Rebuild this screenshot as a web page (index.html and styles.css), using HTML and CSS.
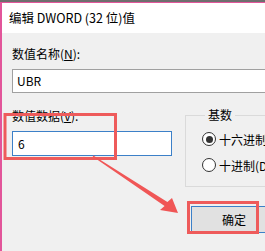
FILE: index.html
```html
<!DOCTYPE html>
<html lang="zh-CN">
<head>
<meta charset="UTF-8">
<title>编辑 DWORD (32 位)值</title>
<link rel="stylesheet" href="styles.css">
</head>
<body>

<div class="topstrip"></div>
<div class="window">
    <div class="titlebar">编辑 DWORD (32 位)值</div>
    <div class="content">
        <div class="label">数值名称(<u>N</u>):</div>
        <div class="textbox name-box">UBR</div>

        <div class="row">
            <div class="left-col">
                <div class="label">数值数据(<u>V</u>):</div>
                <div class="textbox data-box">6</div>
            </div>
            <div class="right-col">
                <fieldset class="group">
                    <legend>基数</legend>
                    <div class="radio-row">
                        <span class="radio checked"></span>
                        <span>十六进制(H)</span>
                    </div>
                    <div class="radio-row">
                        <span class="radio"></span>
                        <span>十进制(D)</span>
                    </div>
                </fieldset>
                <button class="ok-button">确定</button>
            </div>
        </div>
    </div>
</div>

<!-- red annotation marks drawn over the dialog -->
<svg class="marks" width="265" height="251" viewBox="0 0 265 251">
    <rect x="5" y="114.5" width="110.5" height="44" fill="none" stroke="#ee5b5b" stroke-width="3"/>
    <rect x="188.5" y="202.5" width="69" height="30" fill="none" stroke="#ee5b5b" stroke-width="3"/>
    <polygon points="93.3,155.6 167.4,201.9 172,198 178,213 160,210 164.6,206.1 92.7,156.4" fill="#f05656"/>
</svg>

</body>
</html>
```

FILE: styles.css
```css
body {
    margin: 0;
    width: 265px;
    height: 251px;
    overflow: hidden;
    position: relative;
    background-color: #f0f0f0;
    font-family: "Noto Sans CJK SC", "Noto Sans", sans-serif;
    font-size: 12px;
    color: #000;
}

.topstrip {
    height: 2px;
    background-color: #6e6e6e;
}

.window {
    border-top: 1px solid #e2559a;
    border-left: 2px solid #e2559a;
    height: 248px;
}

.titlebar {
    height: 30px;
    line-height: 30px;
    padding-left: 7px;
    background-color: #fff;
    white-space: nowrap;
    font-size: 12.5px;
}

.content {
    padding: 13px 0 0 10px;
}

.label {
    height: 16px;
    line-height: 16px;
    white-space: nowrap;
}

.label u {
    text-decoration-thickness: 1px;
}

.textbox {
    box-sizing: border-box;
    background-color: #fff;
    border: 1px solid #a0a0a0;
    padding-left: 4px;
    white-space: nowrap;
}

.name-box {
    margin-top: 7px;
    width: 300px;
    height: 24px;
    line-height: 22px;
}

.row {
    display: flex;
    gap: 13px;
    margin-top: 15px;
}

.left-col {
    width: 160px;
    flex-shrink: 0;
}

.data-box {
    margin-top: 7px;
    height: 25px;
    line-height: 23px;
    border-color: #3c80c8;
    padding-left: 5px;
}

.right-col {
    width: 120px;
    flex-shrink: 0;
    margin-top: -1px;
}

.group {
    margin: 0;
    padding: 8px 0 0 16px;
    height: 80px;
    box-sizing: border-box;
    border: 1px solid #dadada;
}

.group legend {
    padding: 0 3px;
    margin-left: 3px;
    line-height: 16px;
}

.radio-row {
    display: flex;
    align-items: center;
    gap: 3px;
    height: 16px;
    margin-bottom: 10px;
    white-space: nowrap;
}

.radio {
    box-sizing: border-box;
    width: 14px;
    height: 14px;
    border: 1px solid #333;
    border-radius: 50%;
    background-color: #fff;
    display: flex;
    align-items: center;
    justify-content: center;
    flex-shrink: 0;
}

.radio.checked::after {
    content: "";
    width: 7px;
    height: 7px;
    border-radius: 50%;
    background-color: #333;
}

.ok-button {
    display: block;
    margin: 19px 0 0 6px;
    width: 86px;
    height: 27px;
    box-sizing: border-box;
    border: 1px solid #3c80c8;
    background-color: #e1e1e1;
    font-family: inherit;
    font-size: 12px;
    color: #000;
    padding: 0;
}

.marks {
    position: absolute;
    left: 0;
    top: 0;
}
```
